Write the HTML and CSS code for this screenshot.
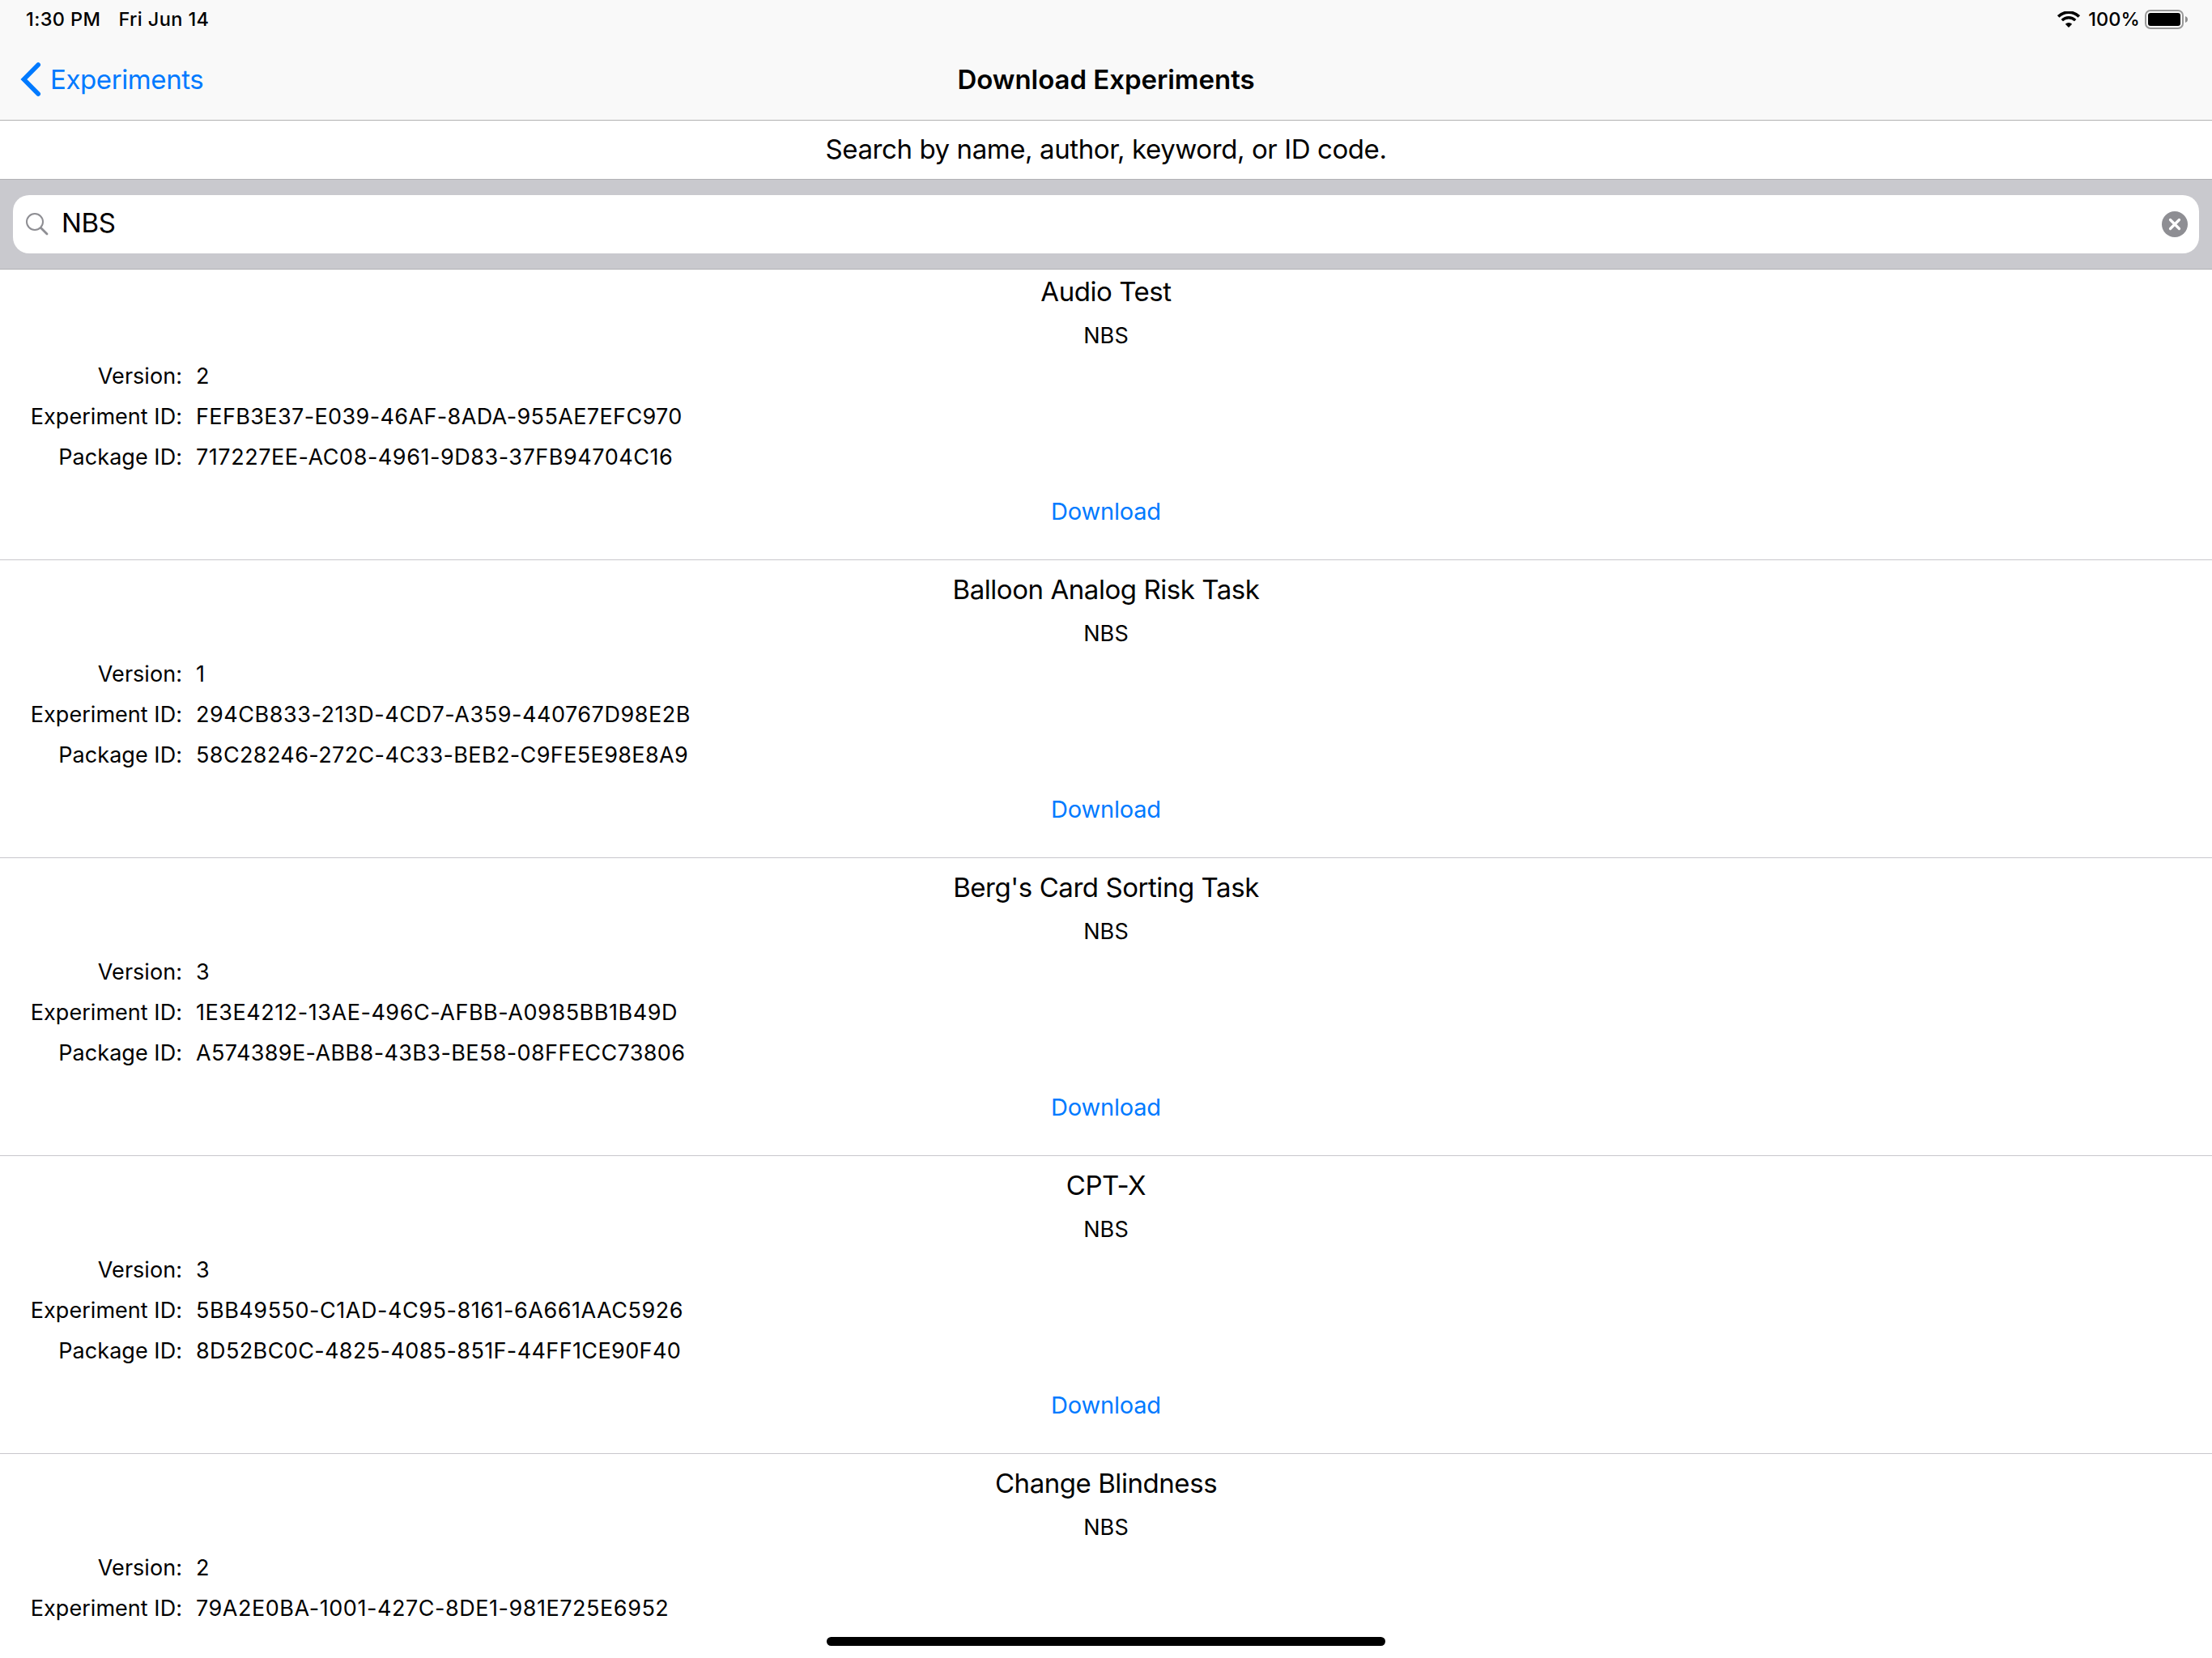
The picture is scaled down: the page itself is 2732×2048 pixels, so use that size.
FILE: index.html
```html
<!DOCTYPE html>
<html lang="en">
<head>
  <meta charset="UTF-8" />
  <meta name="viewport" content="width=device-width, initial-scale=1.0"/>
  <title>Download Experiments</title>
  <link rel="stylesheet" href="styles.css">
</head>
<body>
  <header class="header">
    <!-- Status bar -->
    <div class="status">
      <span class="time">1:30 PM</span>
      <span class="date">Fri Jun 14</span>
      <svg class="wifi" width="28" height="20" viewBox="0 0 28 20" fill="none" stroke="#000">
        <path d="M1.2 6.4a18.2 18.2 0 0 1 25.6 0" stroke-width="3.6"/>
        <path d="M5.8 11.1a11.7 11.7 0 0 1 16.4 0" stroke-width="3.4"/>
        <path d="M14 20l-4.2-4.3a6 6 0 0 1 8.4 0z" fill="#000" stroke="none"/>
      </svg>
      <span class="percent">100%</span>
      <svg class="battery" width="53" height="24" viewBox="0 0 53 24">
        <rect x="1" y="1" width="46" height="22" rx="6" fill="none" stroke="#999" stroke-width="2"/>
        <rect x="4" y="4" width="40" height="16" rx="3" fill="#000"/>
        <path d="M50 8q3 1.2 3 4t-3 4z" fill="#8e8e8e"/>
      </svg>
    </div>

    <!-- Navigation bar -->
    <nav class="nav">
      <a class="back" href="#">
        <svg width="26" height="44" viewBox="0 0 26 44" fill="none" stroke="#007aff" stroke-width="5.6" stroke-linecap="round" stroke-linejoin="miter">
          <path d="M22.2 4L4.4 22l17.8 18"/>
        </svg>
        <span>Experiments</span>
      </a>
      <h1>Download Experiments</h1>
    </nav>
  </header>

  <p class="hint">Search by name, author, keyword, or ID code.</p>

  <div class="search">
    <div class="field">
      <svg width="30" height="30" viewBox="0 0 30 30" fill="none" stroke="#8e8e93" stroke-linecap="round">
        <circle cx="12" cy="12" r="10" stroke-width="2"/>
        <path d="M19.5 19.5l7.5 7.5" stroke-width="2.8"/>
      </svg>
      <span class="query">NBS</span>
      <svg class="clear" width="32" height="32" viewBox="0 0 32 32">
        <circle cx="16" cy="16" r="16" fill="#8e8e93"/>
        <path d="M10.5 10.5l11 11m0-11l-11 11" stroke="#fff" stroke-width="3.2" stroke-linecap="round"/>
      </svg>
    </div>
  </div>

  <!-- Results -->
  <main class="list">
    <section class="item">
      <h2>Audio Test</h2>
      <p class="author">NBS</p>
      <dl>
        <dt>Version:</dt><dd>2</dd>
        <dt>Experiment ID:</dt><dd>FEFB3E37-E039-46AF-8ADA-955AE7EFC970</dd>
        <dt>Package ID:</dt><dd class="loose">717227EE-AC08-4961-9D83-37FB94704C16</dd>
      </dl>
      <a class="download" href="#">Download</a>
    </section>

    <section class="item">
      <h2>Balloon Analog Risk Task</h2>
      <p class="author">NBS</p>
      <dl>
        <dt>Version:</dt><dd>1</dd>
        <dt>Experiment ID:</dt><dd class="loose">294CB833-213D-4CD7-A359-440767D98E2B</dd>
        <dt>Package ID:</dt><dd>58C28246-272C-4C33-BEB2-C9FE5E98E8A9</dd>
      </dl>
      <a class="download" href="#">Download</a>
    </section>

    <section class="item">
      <h2>Berg's Card Sorting Task</h2>
      <p class="author">NBS</p>
      <dl>
        <dt>Version:</dt><dd>3</dd>
        <dt>Experiment ID:</dt><dd class="loose">1E3E4212-13AE-496C-AFBB-A0985BB1B49D</dd>
        <dt>Package ID:</dt><dd>A574389E-ABB8-43B3-BE58-08FFECC73806</dd>
      </dl>
      <a class="download" href="#">Download</a>
    </section>

    <section class="item">
      <h2>CPT-X</h2>
      <p class="author">NBS</p>
      <dl>
        <dt>Version:</dt><dd>3</dd>
        <dt>Experiment ID:</dt><dd class="loose">5BB49550-C1AD-4C95-8161-6A661AAC5926</dd>
        <dt>Package ID:</dt><dd>8D52BC0C-4825-4085-851F-44FF1CE90F40</dd>
      </dl>
      <a class="download" href="#">Download</a>
    </section>

    <section class="item">
      <h2>Change Blindness</h2>
      <p class="author">NBS</p>
      <dl>
        <dt>Version:</dt><dd>2</dd>
        <dt>Experiment ID:</dt><dd class="loose">79A2E0BA-1001-427C-8DE1-981E725E6952</dd>
      </dl>
    </section>
  </main>

  <div class="home-bar"></div>
</body>
</html>
```
FILE: styles.css
```css
* {
  box-sizing: border-box;
  margin: 0;
  padding: 0;
}
body {
  height: 2048px;
  overflow: hidden;
  font-family: Inter, 'Liberation Sans', sans-serif;
  background-color: #fff;
  color: #000;
}
a {
  color: #007aff;
  text-decoration: none;
}
.header {
  height: 149px;
  background-color: #f9f9f9;
  border-bottom: 1px solid #b2b2b2;
}
.status {
  display: flex;
  align-items: center;
  height: 48px;
  padding: 0 30px 0 32px;
  font-size: 23.5px;
  font-weight: 500;
  letter-spacing: 0.4px;
  line-height: 48px;
}
.date {
  margin-left: 22px;
}
.wifi {
  margin-left: auto;
}
.percent {
  margin-left: 10px;
  letter-spacing: 0.1px;
}
.battery {
  margin-left: 6px;
}
.nav {
  display: grid;
  grid-template-columns: 1fr auto 1fr;
  align-items: center;
  height: 100px;
  font-size: 33px;
}
.back {
  display: flex;
  align-items: center;
  padding-left: 25px;
  gap: 11px;
  letter-spacing: -0.4px;
  line-height: 44px;
}
.nav h1 {
  font-size: 33px;
  font-weight: 600;
  letter-spacing: -0.05px;
  line-height: 44px;
}
.hint {
  height: 72px;
  font-size: 33px;
  letter-spacing: -0.41px;
  line-height: 70px;
  text-align: center;
}
.search {
  height: 112px;
  padding: 19px 16px;
  background-color: #c9c9ce;
  border-top: 1px solid #b2b2b5;
  border-bottom: 1px solid #b2b2b5;
}
.field {
  display: flex;
  align-items: center;
  height: 72px;
  padding: 0 14px 0 15px;
  background-color: #fff;
  border-radius: 20px;
}
.query {
  margin-left: 15px;
  padding-bottom: 4px;
  font-size: 33px;
  letter-spacing: -0.4px;
  line-height: 66px;
}
.clear {
  margin-left: auto;
}
.item {
  height: 368px;
  padding-top: 13px;
  border-bottom: 1px solid #c8c7cc;
  text-align: center;
}
.item:first-child {
  height: 359px;
  padding-top: 4px;
}
.item:last-child {
  height: auto;
  border-bottom: none;
}
.item h2 {
  margin-bottom: 7px;
  font-size: 33px;
  font-weight: 400;
  letter-spacing: -0.44px;
  line-height: 46px;
}
.author {
  font-size: 27px;
  letter-spacing: 0.1px;
  line-height: 50px;
}
dl {
  display: grid;
  grid-template-columns: 225px auto;
  column-gap: 17px;
  font-size: 27px;
  line-height: 50px;
}
dt {
  letter-spacing: 0.04px;
  text-align: right;
}
dd {
  letter-spacing: 0.38px;
  text-align: left;
}
.loose {
  letter-spacing: 0.54px;
}
.download {
  display: block;
  margin-top: 17px;
  font-size: 29px;
  letter-spacing: -0.2px;
  line-height: 50px;
}
.home-bar {
  position: absolute;
  left: 1021px;
  top: 2022px;
  width: 690px;
  height: 11px;
  border-radius: 6px;
  background-color: #000;
}
```
